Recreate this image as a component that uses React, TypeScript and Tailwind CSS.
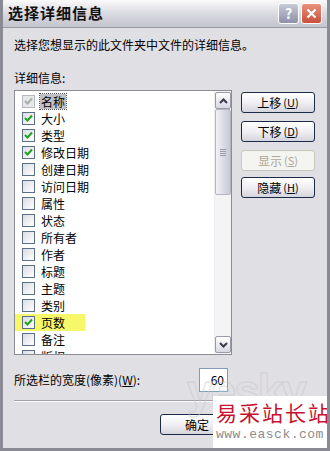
import React from 'react';

const items = [
  { label: '名称', checked: true, locked: true },
  { label: '大小', checked: true },
  { label: '类型', checked: true },
  { label: '修改日期', checked: true },
  { label: '创建日期', checked: false },
  { label: '访问日期', checked: false },
  { label: '属性', checked: false },
  { label: '状态', checked: false },
  { label: '所有者', checked: false },
  { label: '作者', checked: false },
  { label: '标题', checked: false },
  { label: '主题', checked: false },
  { label: '类别', checked: false },
  { label: '页数', checked: true, marked: true },
  { label: '备注', checked: false },
  { label: '版权', checked: false },
];

function Check({ checked, locked }: { checked: boolean; locked?: boolean }) {
  return (
    <div
      className={`w-[13px] h-[13px] border flex items-center justify-center shrink-0 ${
        locked ? 'border-[#b5b8c0] bg-[#e8e8ea]' : 'border-[#5b7088] bg-gradient-to-br from-[#dcdde2] to-white'
      }`}
    >
      {checked && (
        <svg width="9" height="9" viewBox="0 0 9 9">
          <path
            d="M1 4 L3.5 6.5 L8 1.5"
            fill="none"
            stroke={locked ? '#a8b0a8' : '#21a121'}
            strokeWidth="2"
          />
        </svg>
      )}
    </div>
  );
}

function XpButton({ label, hot, disabled }: { label: string; hot: string; disabled?: boolean }) {
  return (
    <div
      className={`w-[74px] h-[21px] rounded-[3px] border flex items-center justify-center text-[12px] ${
        disabled
          ? 'border-[#c9c7ba] bg-[#f4f4f0] text-[#aca899]'
          : 'border-[#1c2a4a] bg-gradient-to-b from-white via-[#f0f0f4] to-[#d4d4dc] text-black'
      }`}
    >
      {label}
      <span className="ml-[2px] text-[11px]">
        (<span className="underline">{hot}</span>)
      </span>
    </div>
  );
}

export default function App() {
  return (
    <div
      className="relative w-[330px] h-[451px] overflow-hidden bg-[#e0dfe3] border-l-[3px] border-r-[3px] border-b-[3px] border-[#8a8a94]"
      style={{ fontFamily: '"Noto Sans CJK SC", "Liberation Sans", sans-serif' }}
    >
      {/* title bar */}
      <div className="h-[28px] -mx-[3px] px-[8px] flex items-center rounded-t-[6px] bg-gradient-to-b from-[#fbfbfc] via-[#d9d9e0] to-[#c4c4ce] border-b border-[#9a9aa4]">
        <span className="text-[15px] font-bold text-[#111] tracking-[1px]">选择详细信息</span>
        <div className="ml-auto flex gap-[2px]">
          <div className="w-[21px] h-[21px] rounded-[3px] border border-white bg-gradient-to-b from-[#c8cad8] to-[#8e90a8] flex items-center justify-center text-white text-[14px] font-bold">
            ?
          </div>
          <div className="w-[21px] h-[21px] rounded-[3px] border border-white bg-gradient-to-b from-[#e8907c] to-[#c8503c] flex items-center justify-center">
            <svg width="11" height="11" viewBox="0 0 11 11">
              <path d="M1.5 1.5 L9.5 9.5 M9.5 1.5 L1.5 9.5" stroke="white" strokeWidth="2.2" />
            </svg>
          </div>
        </div>
      </div>

      <div className="pl-[11px] pr-[12px]">
        <div className="mt-[8px] text-[12px] leading-[18px] text-black">选择您想显示的此文件夹中文件的详细信息。</div>
        <div className="mt-[15px] text-[12px] leading-[18px] text-black">详细信息:</div>

        <div className="mt-[3px] flex">
          {/* list box */}
          <div className="w-[219px] h-[265px] border border-[#8c8c96] bg-white flex">
            <div className="flex-1 overflow-hidden pt-[2px]">
              {items.map((it) => (
                <div
                  key={it.label}
                  className={`h-[17px] flex items-center pl-[7px] ${it.marked ? 'bg-[#f6f86a] w-[70px]' : ''}`}
                >
                  <Check checked={it.checked} locked={it.locked} />
                  <span
                    className={`ml-[5px] text-[12px] leading-[15px] px-[1px] ${
                      it.locked ? 'bg-[#c0c0c6] outline outline-1 outline-dotted outline-[#555]' : ''
                    }`}
                  >
                    {it.label}
                  </span>
                </div>
              ))}
            </div>
            {/* scrollbar */}
            <div className="w-[17px] flex flex-col bg-[#f4f4f6] border-l border-[#ededf0]">
              <div className="h-[17px] mt-[1px] rounded-[2px] border border-[#9a9aa8] bg-gradient-to-b from-white to-[#d8d8e2] flex items-center justify-center">
                <svg width="9" height="6" viewBox="0 0 9 6">
                  <path d="M1 5 L4.5 1.5 L8 5" fill="none" stroke="#3a3a48" strokeWidth="2" />
                </svg>
              </div>
              <div className="h-[86px] rounded-[2px] border border-[#b4b4c2] bg-gradient-to-r from-[#f2f2f6] via-[#dcdce6] to-[#c8c8d4] flex items-center justify-center">
                <div className="flex flex-col gap-[1px]">
                  <div className="w-[6px] h-[1px] bg-[#9a9aa8]" />
                  <div className="w-[6px] h-[1px] bg-[#9a9aa8]" />
                  <div className="w-[6px] h-[1px] bg-[#9a9aa8]" />
                  <div className="w-[6px] h-[1px] bg-[#9a9aa8]" />
                </div>
              </div>
              <div className="flex-1" />
              <div className="h-[17px] mb-[1px] rounded-[2px] border border-[#9a9aa8] bg-gradient-to-b from-white to-[#d8d8e2] flex items-center justify-center">
                <svg width="9" height="6" viewBox="0 0 9 6">
                  <path d="M1 1 L4.5 4.5 L8 1" fill="none" stroke="#3a3a48" strokeWidth="2" />
                </svg>
              </div>
            </div>
          </div>

          {/* buttons */}
          <div className="ml-[9px] mt-[2px] flex flex-col">
            <XpButton label="上移" hot="U" />
            <div className="mt-[8px]">
              <XpButton label="下移" hot="D" />
            </div>
            <div className="mt-[8px]">
              <XpButton label="显示" hot="S" disabled />
            </div>
            <div className="mt-[6px]">
              <XpButton label="隐藏" hot="H" />
            </div>
          </div>
        </div>

        <div className="mt-[12px] flex items-center h-[26px]">
          <span className="text-[12px] text-black">
            所选栏的宽度(像素)(<span className="underline">W</span>):
          </span>
          <div className="ml-auto mr-[87px] w-[29px] h-[24px] border border-[#7f9db9] bg-white text-[12px] text-right pr-[3px] leading-[22px]">
            60
          </div>
        </div>

        <div className="mt-[7px] h-[2px] border-t border-[#a0a0a8] border-b-white border-b" />

        <div className="mt-[12px] pl-[146px]">
          <div className="w-[74px] h-[21px] rounded-[3px] border border-[#1c2a4a] bg-gradient-to-b from-white via-[#f0f0f4] to-[#d4d4dc] flex items-center justify-center text-[12px]">
            确定
          </div>
        </div>
      </div>

      {/* watermarks */}
      <div className="absolute left-[184px] top-[368px] text-[46px] font-bold text-transparent leading-none tracking-[-2px] [-webkit-text-stroke:1px_#c8c8cc] opacity-60 pointer-events-none" style={{ fontFamily: '"Liberation Sans", sans-serif' }}>
        yesky
      </div>
      <div className="absolute left-[210px] top-[396px] w-[120px] h-[55px] bg-white flex flex-col pl-[3px] pt-[2px]">
        <span className="whitespace-nowrap text-[21px] leading-[28px] text-[#c8102e] tracking-[2px]" style={{ fontFamily: '"Noto Sans CJK SC", serif' }}>
          易采站长站
        </span>
        <span className="whitespace-nowrap text-[13px] leading-[18px] text-[#8c8c8c] tracking-[0.5px]" style={{ fontFamily: '"Liberation Mono", monospace' }}>
          www.easck.com
        </span>
      </div>
    </div>
  );
}
